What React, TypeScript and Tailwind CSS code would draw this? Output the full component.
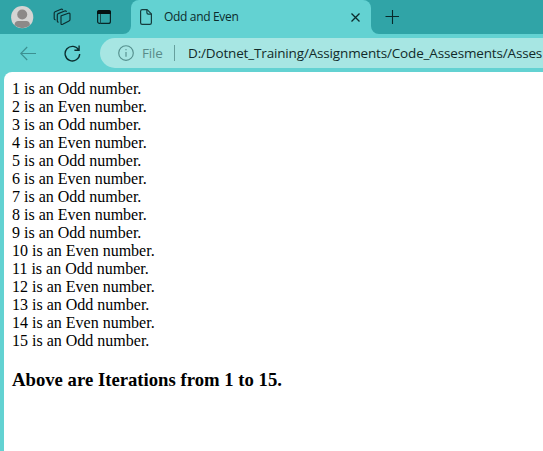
const numbers = Array.from({ length: 15 }, (_, i) => i + 1);

function Avatar() {
  return (
    <svg className="ml-[11px] h-[23px] w-[23px] shrink-0" viewBox="0 0 23 23">
      <circle cx="11.2" cy="11.2" r="11.1" fill="#d5d4d3" />
      <circle cx="11.2" cy="8.5" r="5" fill="#8d8988" />
      <path d="M3.7 19.3C3.3 16.7 5 15 7.2 15h8.2c2.3 0 3.8 1.7 3.4 4.2a11.1 11.1 0 0 1-15.1.1Z" fill="#8d8988" />
    </svg>
  );
}

function Workspaces() {
  return (
    <svg className="ml-[19px] h-[18px] w-[18px] shrink-0" viewBox="0 0 18 18" fill="none" stroke="#0c2d2e" strokeWidth="1.15" strokeLinejoin="round" strokeLinecap="round">
      <path d="M8.3 7.7 15.4 5.2Q17 4.8 17 6.3v5.3q0 1-1 1.4l-6.3 3.3q-1.7.7-1.7-.9V8.5q0-.5.3-.8Z" />
      <path d="M5.2 14.1q-.9-.2-.9-1.2V6.8q0-.9.9-1.2L11.7 3q1.1-.4 1.6.4" />
      <path d="M2.2 11.8q-1-.1-1-1.2V5.1q0-1 .9-1.4L8 1.2q1.1-.4 1.6.5" />
    </svg>
  );
}

function TabActions() {
  return (
    <svg className="ml-[26px] h-[14px] w-[14px] shrink-0" viewBox="0 0 14 14">
      <rect x="0.6" y="0.6" width="12.8" height="12.8" rx="2" fill="none" stroke="#082728" strokeWidth="1.2" />
      <path d="M2 0h10q2 0 2 2v2H0V2q0-2 2-2Z" fill="#061112" />
      <path d="M3.5 4v9.5" stroke="#164f50" strokeWidth="1" />
    </svg>
  );
}

function PageIcon() {
  return (
    <svg className="ml-[9px] h-4 w-3 shrink-0" viewBox="0 0 12 16" fill="none" stroke="#153c3d" strokeWidth="1.2" strokeLinejoin="round">
      <path d="M2.2.6h4.9l4.3 4.3v8.9q0 1.6-1.6 1.6H2.2Q.6 15.4.6 13.8V2.2Q.6.6 2.2.6Z" />
      <path d="M6.9.8v3q0 1.4 1.4 1.4h3" />
    </svg>
  );
}

function Flare({ side }: { side: "left" | "right" }) {
  return (
    <svg className="h-2 w-2 shrink-0 self-end" viewBox="0 0 8 8" fill="#63d2d2">
      <path d={side === "left" ? "M8 0v8H0A8 8 0 0 0 8 0Z" : "M0 0v8h8A8 8 0 0 1 0 0Z"} />
    </svg>
  );
}

function TabStrip() {
  return (
    <div className="flex h-[34px] items-center bg-[#30a4a7]">
      <Avatar />
      <Workspaces />
      <TabActions />
      <div className="ml-3 flex h-full">
        <Flare side="left" />
        <div className="flex h-full w-[240px] items-center rounded-t-lg bg-[#63d2d2]">
          <PageIcon />
          <span className="ml-[12px] w-[180px] whitespace-nowrap text-[12px] leading-4 tracking-[-0.33px] text-[#0c2b2c]">Odd and Even</span>
          <svg className="ml-[7px] mt-px h-[9px] w-[9px]" viewBox="0 0 9 9" stroke="#0c2b2c" strokeWidth="1.3">
            <path d="m.5.5 8 8M8.5.5l-8 8" />
          </svg>
        </div>
        <Flare side="right" />
      </div>
      <svg className="ml-[6px] h-[14px] w-[14px]" viewBox="0 0 14 14" stroke="#08292a" strokeWidth="1.1">
        <path d="M7.5 0v14M.5 6.5H14" />
      </svg>
    </div>
  );
}

function Toolbar() {
  return (
    <div className="flex h-[38px] items-center bg-[#63d2d2]">
      <svg className="ml-5 h-[15px] w-4 shrink-0" viewBox="0 0 16 15" fill="none" stroke="#3c9091" strokeWidth="1.15">
        <path d="M16 7.5H.8M7.2 1 .7 7.5l6.5 6.5" />
      </svg>
      <svg className="ml-7 h-[17px] w-[17px] shrink-0" viewBox="0 0 17 17" fill="none" stroke="#0b2e2f" strokeWidth="1.35">
        <path d="M14.8 5.1A7.3 7.3 0 1 0 15.7 9M15.1.4v4.8h-4.7" />
      </svg>
      <div className="ml-[19px] flex h-[30px] min-w-0 flex-1 items-center rounded-l-full bg-[#a7e6e3] text-[13.5px] leading-5">
        <svg className="ml-[18px] h-4 w-4 shrink-0" viewBox="0 0 16 16" fill="none" stroke="#55908e" strokeWidth="1.15">
          <circle cx="8" cy="8" r="7.3" />
          <path d="M8 7v4.8" />
          <circle cx="8" cy="4.7" r=".65" fill="#55908e" stroke="none" />
        </svg>
        <span className="ml-2 w-[21px] shrink-0 tracking-[-0.2px] text-[#598b89]">File</span>
        <span className="ml-[11px] h-4 w-px shrink-0 bg-[#669f9d]" />
        <span className="ml-[13px] whitespace-nowrap tracking-[-0.16px] text-[#122b2a]">D:/Dotnet_Training/Assignments/Code_Assesments/Asses</span>
      </div>
    </div>
  );
}

export default function App() {
  return (
    <div className="flex h-[451px] w-[543px] flex-col overflow-hidden bg-[#63d2d2] font-['Open_Sans','Noto_Sans',sans-serif]">
      <TabStrip />
      <Toolbar />
      <main className="ml-1 flex-1 rounded-tl-lg bg-white px-2 pt-2 font-['Liberation_Serif',serif] text-[16px] leading-[18px] text-black">
        {numbers.map((n) => (
          <p key={n}>{n} is an {n % 2 ? "Odd" : "Even"} number.</p>
        ))}
        <h3 className="mt-[19px] text-[18.72px] font-bold leading-[22px]">Above are Iterations from 1 to 15.</h3>
      </main>
    </div>
  );
}
